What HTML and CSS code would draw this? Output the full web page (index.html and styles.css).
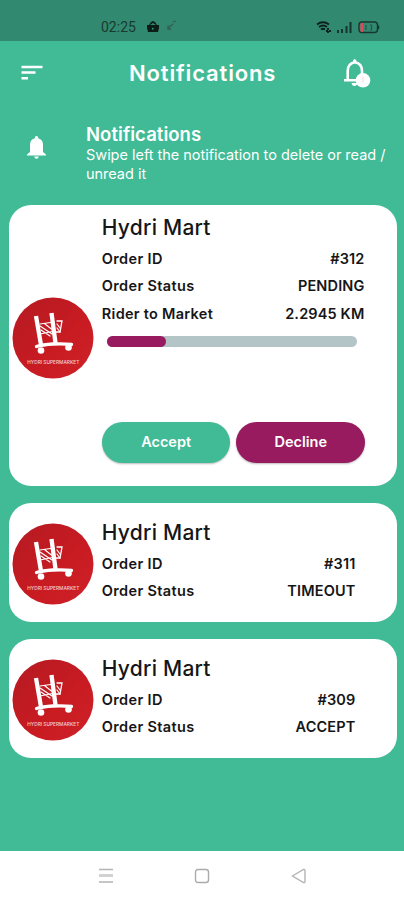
FILE: index.html
```html
<!DOCTYPE html>
<html lang="en">
<head>
<meta charset="utf-8">
<title>Notifications</title>
<link rel="stylesheet" href="styles.css">
</head>
<body>
<svg width="0" height="0" class="defs" aria-hidden="true">
  <defs>
    <linearGradient id="red" x1="0" y1="0" x2="1" y2="1">
      <stop offset="0" stop-color="#b51a22"/><stop offset=".6" stop-color="#c91b22"/><stop offset="1" stop-color="#cf2128"/>
    </linearGradient>
    <symbol id="cart" viewBox="0 0 82 82">
      <circle cx="41" cy="41" r="40.5" fill="url(#red)"/>
      <g fill="none" stroke="#fff" stroke-linecap="round">
        <path d="M28 27l14-2M28 29l12 8M29 33l9 6M33 27l9 7M28 37l15-3M45 27l3 4M45 31l3 4" stroke-width="1.200"/>
        <path d="M45 24h5l-2 11h-4" stroke-width="1.300"/>
        <path d="M24 19l5 29M39.500 16l4 30" stroke-width="4.300" stroke-linecap="butt"/>
        <path d="M24.500 49.500c8-2.500 24-3.500 35-2" stroke-width="3.300"/>
      </g>
      <circle cx="29" cy="53.500" r="3.300" fill="#fff"/><circle cx="56.500" cy="50.500" r="3.300" fill="#fff"/>
    </symbol>
  </defs>
</svg>
<div class="phone">
  <div class="status">
    <span class="clock">02:25</span>
    <svg class="st-left" width="34" height="14" viewBox="0 0 34 14">
      <path d="M1 5h2l2-3 2-1 2 1 2 3h2v3l-1 4H2L1 8z" fill="#0c1d18"/><path d="M4 5l3-2 3 2z" fill="#31896f"/><path d="M6 7.500l2.500 1.200L6 10z" fill="#31896f"/>
      <path d="M22 8l5-4M22 5.500V9h3M27 2l3-1" stroke="#355d50" stroke-width="1.300" fill="none"/>
    </svg>
    <svg class="st-right" width="66" height="14" viewBox="0 0 66 14">
      <g fill="none" stroke="#0d201b" stroke-width="1.900"><path d="M1 4.500q6-4.500 12 0M3 7q4-3 8 0M5 9.500q2-1.500 4 0"/><path d="M10 11h5M12 8v5" stroke-dasharray="2 1"/></g>
      <path d="M21 10h2v3h-2zM25 9h2v4h-2zM29.500 6h2v7h-2zM33.500 2h2v11h-2z" fill="#14362c"/>
      <rect x="43" y="2" width="18.500" height="10.500" rx="3" fill="none" stroke="#16382e" stroke-width="1.400"/>
      <path d="M44.500 4q0-1 1.500-1h1v9h-1q-1.500 0-1.500-1z" fill="#e0485c"/><path d="M62.500 5.500v3.500" stroke="#16382e" stroke-width="1.500"/>
      <path d="M50 5v5M54 5h1.500v5H54" stroke="#20584a" stroke-width="1.200" fill="none"/>
    </svg>
  </div>
  <header class="appbar">
    <svg class="menu" width="23" height="16" viewBox="0 0 23 16"><path d="M1.500 2h21M1.500 7.500h14M1.500 13.300h6.500" stroke="#fff" stroke-width="2.600"/></svg>
    <h1>Notifications</h1>
    <svg class="bell" width="30" height="32" viewBox="0 0 30 32">
      <path d="M4.700 21.500V13q0-7.500 6.800-8.800Q19 5 19 13v8.500" fill="none" stroke="#fff" stroke-width="2.600"/>
      <path d="M1 21h21v2.600H1zM10 2.500q1.700-3 3.400 0V5H10zM8.500 25h6q-.5 3-3 3t-3-3z" fill="#fff"/>
      <circle cx="20" cy="22.300" r="7.300" fill="#fff"/><path d="M20 18.500v5.500" stroke="#f3dfe6" stroke-width="1.200"/>
    </svg>
  </header>
  <section class="intro">
    <svg width="20" height="23" viewBox="0 0 20 23"><path d="M9.500 0q1.800 0 1.800 2.200Q16 3.500 16 9v7l3 2.500v1H0v-1L3 16V9q0-5.500 4.700-6.800Q7.700 0 9.500 0zM7.200 20.500h4.600q-.3 2.300-2.300 2.300t-2.300-2.300z" fill="#fff"/></svg>
    <div>
      <h2>Notifications</h2>
      <p><span>Swipe left the notification to delete or read /</span><br><span>unread it</span></p>
    </div>
  </section>
  <main>
    <article class="card large">
      <div class="logo"><svg width="82" height="82"><use href="#cart"/></svg><span>HYDRI SUPERMARKET</span></div>
      <div class="info">
        <h3>Hydri Mart</h3>
        <div class="row"><span>Order ID</span><span class="value">#312</span></div>
        <div class="row"><span>Order Status</span><span class="value">PENDING</span></div>
        <div class="row"><span class="long">Rider to Market</span><span class="value">2.2945 KM</span></div>
        <div class="track"><div class="fill"></div></div>
        <div class="actions"><button class="accept">Accept</button><button class="decline">Decline</button></div>
      </div>
    </article>
    <article class="card">
      <div class="logo"><svg width="82" height="82"><use href="#cart"/></svg><span>HYDRI SUPERMARKET</span></div>
      <div class="info">
        <h3>Hydri Mart</h3>
        <div class="row"><span>Order ID</span><span class="value">#311</span></div>
        <div class="row"><span>Order Status</span><span class="value">TIMEOUT</span></div>
      </div>
    </article>
    <article class="card">
      <div class="logo"><svg width="82" height="82"><use href="#cart"/></svg><span>HYDRI SUPERMARKET</span></div>
      <div class="info">
        <h3>Hydri Mart</h3>
        <div class="row"><span>Order ID</span><span class="value">#309</span></div>
        <div class="row"><span>Order Status</span><span class="value">ACCEPT</span></div>
      </div>
    </article>
  </main>
  <nav>
    <svg width="16" height="16" viewBox="0 0 16 16"><path d="M1 1.500h14M1 14h14" stroke="#b4b4b4" stroke-width="1.400"/><path d="M1 7.500h14" stroke="#d2d2d2" stroke-width="3"/></svg>
    <svg width="16" height="16" viewBox="0 0 16 16"><rect x="1.500" y="1.500" width="13" height="13" rx="2.500" fill="none" stroke="#ababab" stroke-width="1.400"/></svg>
    <svg width="16" height="16" viewBox="0 0 16 16"><path d="M1.500 8L12.500 1.500q1.500-.5 1.500 1v11q0 1.500-1.500 1z" fill="none" stroke="#b4b4b4" stroke-width="1.400"/></svg>
  </nav>
</div>
</body>
</html>
```
FILE: styles.css
```css
* { box-sizing: border-box; margin: 0; padding: 0; }
body { font-family: Inter, "Liberation Sans", sans-serif; color: #161616; }
svg { display: block; flex: none; }
span { white-space: nowrap; }
.defs { position: absolute; }
.phone { width: 404px; height: 900px; background: #40bb96; display: flex; flex-direction: column; overflow: hidden; }
.status { height: 41px; background: #31896f; display: flex; align-items: flex-start; padding: 20px 22px 0 101px; }
.clock { font: 14px/14px Roboto, sans-serif; color: #19392f; width: 45px; }
.st-right { margin-left: auto; }
.appbar { height: 64px; display: flex; align-items: center; padding: 0 31px 0 20px; color: #fff; }
.appbar h1 { font-size: 22px; font-weight: 600; line-height: 28px; letter-spacing: .85px; margin-left: 86px; }
.bell { margin: 2px 0 0 auto; }
.intro { height: 100px; display: flex; padding: 18px 0 0 27px; color: #fff; }
.intro svg { margin: 13px 39px 0 0; }
.intro h2 { font-size: 18.500px; font-weight: 600; line-height: 22px; letter-spacing: .05px; }
.intro p { font-size: 14.500px; line-height: 19px; letter-spacing: -.02px; }
main { padding: 0 7px 0 9px; display: flex; flex-direction: column; gap: 16.500px; }
.card { height: 119.500px; background: #fff; border-radius: 22px; display: flex; align-items: center; padding: 0 41px 0 3.500px; }
.card.large { height: 281px; padding-right: 32px; }
.logo { width: 82px; height: 82px; flex: none; display: grid; margin: 4px 0 0 -.2px; }
.large .logo { margin-top: -16px; }
.logo > * { grid-area: 1 / 1; }
.logo span { font-size: 4.800px; font-weight: 500; line-height: 6px; color: #f4cccd; justify-self: center; margin-top: 62px; }
.info { flex: 1; align-self: stretch; margin-left: 7.500px; padding-top: 15.500px; }
.large .info { padding-top: 8px; }
h3 { font-size: 21px; font-weight: 550; line-height: 30px; letter-spacing: .25px; }
.row { display: flex; justify-content: space-between; font-size: 14.500px; font-weight: 600; line-height: 27.700px; letter-spacing: .35px; margin-right: .5px; }
.row .long { letter-spacing: .28px; }
.row .value { letter-spacing: .15px; }
h3 + .row { margin-top: 1.500px; }
.track { height: 11px; border-radius: 6px; background: #b3c5c7; margin: 8px 8px 0 5.500px; }
.fill { width: 59px; height: 11px; border-radius: 6px; background: #981b60; }
.actions { display: flex; gap: 6px; margin-top: 75px; }
.actions button { flex: 1; height: 41px; border: 0; border-radius: 21px; color: #fff; font: 600 14.500px/20px Inter, sans-serif; background: #40bb96; box-shadow: 0 1px 2px #0004; }
.actions .decline { background: #981b60; }
nav { margin-top: auto; height: 49px; background: #fff; display: flex; justify-content: center; gap: 80.500px; padding-top: 17px; }
```
